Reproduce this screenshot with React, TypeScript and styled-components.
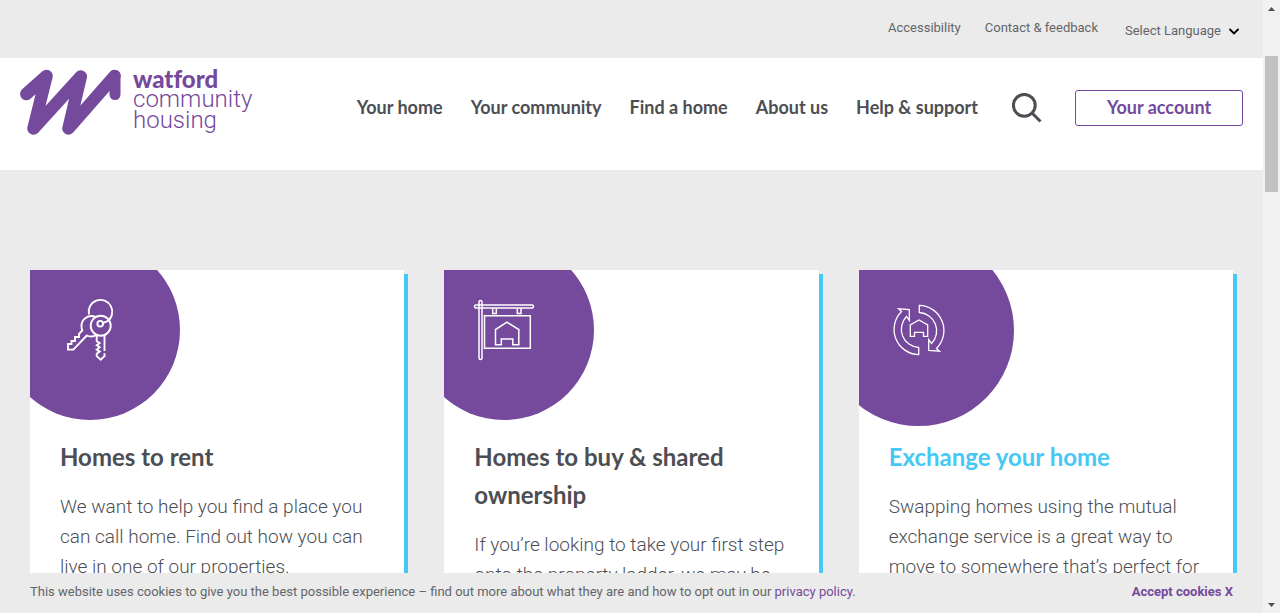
import React from 'react';
import styled, { createGlobalStyle, ThemeProvider } from 'styled-components';

const theme = {
  purple: '#75499c',
  blue: '#45c8f5',
  ink: '#4d4e53',
  softInk: '#646569',
  grey: '#ebebeb',
  heading: 'Lato, "Open Sans", sans-serif',
  body: 'Roboto, "Open Sans", sans-serif',
};

const GlobalStyle = createGlobalStyle`
  *, *::before, *::after { box-sizing: border-box; }
  body {
    margin: 0;
    background: ${theme.grey};
    color: ${theme.ink};
    font-family: ${theme.body};
  }
  h2, p, ul { margin: 0; padding: 0; }
  ul { list-style: none; }
  a { color: inherit; text-decoration: none; }
`;

const Shell = styled.div`
  display: grid;
  grid-template-columns: minmax(0, 1fr) 17px;
  height: 100vh;
  overflow: hidden;
`;

const Page = styled.div`
  display: flex;
  flex-direction: column;
  min-height: 0;
`;

const TopBar = styled.div`
  display: flex;
  flex: none;
  justify-content: flex-end;
  align-items: flex-start;
  gap: 24px;
  min-height: 58px;
  padding: 18px 23px 0 20px;
  color: ${p => p.theme.softInk};
  font-size: 13px;
  line-height: 20px;
`;

const Language = styled.div`
  display: grid;
  grid-template-columns: 103px 12px;
  align-items: center;
  margin: 3px 0 0 3px;
`;

const LanguageSelect = styled.select`
  grid-area: 1 / 1 / 2 / 3;
  width: 100%;
  padding: 0;
  border: 0;
  background: none;
  appearance: none;
  color: inherit;
  font: inherit;
`;

const Chevron = styled.svg`
  grid-area: 1 / 2;
  width: 12px;
  height: 12px;
  pointer-events: none;
`;

const Header = styled.header`
  display: flex;
  flex: none;
  justify-content: space-between;
  align-items: flex-start;
  padding: 11px 20px 23px;
  background: #fff;
`;

const Logo = styled.a`
  display: flex;
  gap: 12px;
  color: ${p => p.theme.purple};
`;

const LogoMark = styled.svg`
  width: 101px;
  height: 66px;
`;

const LogoWords = styled.span`
  display: flex;
  flex-direction: column;
  font-family: ${p => p.theme.body};
  font-size: 24px;
  font-weight: 300;
  font-variant-ligatures: none;
  line-height: 21px;

  strong {
    font-family: ${p => p.theme.heading};
    font-weight: 900;
    line-height: 20px;
  }
`;

const Nav = styled.nav`
  display: flex;
  align-items: center;
  min-height: 78px;
`;

const NavList = styled.ul`
  display: flex;
  gap: 28px;
  padding-bottom: 2px;
  font-family: ${p => p.theme.heading};
  font-size: 18px;
  font-weight: 700;
  line-height: 24px;
`;

const SearchButton = styled.button`
  display: flex;
  margin: 0 33px 0 34px;
  padding: 0;
  border: 0;
  background: none;
  color: inherit;

  svg { width: 30px; height: 30px; }
`;

const AccountButton = styled.button`
  width: 168px;
  height: 36px;
  padding: 0 0 2px;
  border: 1px solid ${p => p.theme.purple};
  border-radius: 3px;
  background: #fff;
  color: ${p => p.theme.purple};
  font: 700 18px/24px ${p => p.theme.heading};
`;

const Main = styled.main`
  flex: 1;
  min-height: 0;
  overflow: hidden;
  padding: 100px 30px 0;
`;

const Cards = styled.div`
  display: grid;
  grid-template-columns: repeat(3, minmax(0, 1fr));
  gap: 40px;
`;

const Card = styled.article`
  overflow: hidden;
  min-height: 420px;
  background: #fff;
  box-shadow: 4px 4px 0 ${p => p.theme.blue};
`;

const IconHolder = styled.div`
  display: flex;
  justify-content: center;
  align-items: center;
  width: 120px;
  height: 120px;
`;

const Disc = styled.div<{ $size: number }>`
  display: flex;
  flex: none;
  justify-content: center;
  align-items: center;
  width: ${p => p.$size}px;
  height: ${p => p.$size}px;
  border-radius: 50%;
  background: ${p => p.theme.purple};

  svg { width: 60px; height: 60px; overflow: visible; }
`;

const CardBody = styled.div`
  padding: 48px 30px 30px;
`;

const CardTitle = styled.h2<{ $active?: boolean }>`
  margin-bottom: 16px;
  color: ${p => (p.$active ? p.theme.blue : p.theme.ink)};
  font: 700 24px/38px ${p => p.theme.heading};
`;

const CardText = styled.p`
  font-size: 19px;
  font-weight: 300;
  line-height: 30px;
`;

const CookieBar = styled.footer`
  display: flex;
  flex: none;
  justify-content: space-between;
  align-items: center;
  min-height: 40px;
  padding: 0 30px 2px;
  background: ${p => p.theme.grey};
  color: ${p => p.theme.softInk};
  font-size: 13px;
  line-height: 20px;

  a { color: ${p => p.theme.purple}; }
`;

const AcceptButton = styled.button`
  padding: 0;
  border: 0;
  background: none;
  color: ${p => p.theme.purple};
  font: 700 13px/20px ${p => p.theme.body};
`;

const ScrollTrack = styled.div`
  display: flex;
  flex-direction: column;
  align-items: center;
  justify-content: space-between;
  padding: 7px 2px 6px;
  background: #f1f1f1;
`;

const ScrollThumb = styled.div`
  width: 13px;
  height: 136px;
  margin: 45px 0 auto;
  background: #c1c1c1;
`;

const Arrow = styled.svg`
  width: 7px;
  height: 4px;
  fill: #505050;
`;

const KeysIcon = () => (
  <svg viewBox="0 0 60 60" fill="none" stroke="#fff" strokeWidth="1.9" aria-hidden="true">
    <path d="M29 14.5A11.8 11.8 0 1 1 47 21.5L42.5 23.2" />
    <circle cx="40.7" cy="25.7" r="10" />
    <circle cx="40.2" cy="23.7" r="2.8" />
    <path d="M36.7 35v6.2l3 1.8-3 2.3 3 2-3 2.3 3 2-3 2.2v2.4l4 3.6 3.8-3.8v-2.8M44.5 51V35" />
    <path d="M35.5 16.8C28 14 21 19.5 21.5 26.5c0 1.5.3 2.8.8 4L19 34v3h-4v4h-3.5v3H8v5.6h5.3L26.8 35.5c3 1.3 6.5 1.3 9.7-.5" />
  </svg>
);

const SignIcon = () => (
  <svg viewBox="0 0 60 60" fill="none" stroke="#fff" strokeWidth="1.5" aria-hidden="true">
    <path d="M8 8v50a1.5 1.5 0 0 1-3 0V8H2a1.5 1.5 0 0 1 0-3h3V2a1.5 1.5 0 0 1 3 0v3h50a1.5 1.5 0 0 1 0 3zM5 8V5h3v3z" />
    <path d="M18.7 8v5.5h3.6V8M43.3 8v5.5H47V8" />
    <path d="M10.5 15.8h45.8v32.5H10.5z" />
    <path d="M21.5 44.7V29.5L33 22.2l11.8 7.3v15.2h-6V39H27.3v5.7z" />
  </svg>
);

const SWAP_ARROW =
  'M.3-24.7A25.3 25.3 0 0 1 17.5 18.5L20.5 21.2 9.7 20.5V9.5L12.5 13.5A18.3 18.3 0 0 0 .3-17.5z';

const ExchangeIcon = () => (
  <svg viewBox="-30 -30 60 60" fill="none" stroke="#fff" strokeWidth="1.3" aria-hidden="true">
    <path d={SWAP_ARROW} />
    <path d={SWAP_ARROW} transform="rotate(180)" />
    <path d="M-8.7 6.3V-5L0-10 8.7-5V6.3H4.5v-4h-9v4z" />
  </svg>
);

const CARDS = [
  {
    title: 'Homes to rent',
    text: 'We want to help you find a place you can call home. Find out how you can live in one of our properties.',
    Icon: KeysIcon,
  },
  {
    title: 'Homes to buy & shared ownership',
    text: 'If you’re looking to take your first step onto the property ladder, we may be able to help.',
    Icon: SignIcon,
  },
  {
    title: 'Exchange your home',
    text: 'Swapping homes using the mutual exchange service is a great way to move to somewhere that’s perfect for you.',
    Icon: ExchangeIcon,
    active: true,
  },
];

const NAV_ITEMS = ['Your home', 'Your community', 'Find a home', 'About us', 'Help & support'];

export default function App() {
  return (
    <ThemeProvider theme={theme}>
      <GlobalStyle />
      <Shell>
        <Page>
          <TopBar>
            <a href="#accessibility">Accessibility</a>
            <a href="#contact">Contact &amp; feedback</a>
            <Language>
              <LanguageSelect aria-label="Select Language">
                <option>Select Language</option>
              </LanguageSelect>
              <Chevron viewBox="0 0 12 12" fill="none" stroke="#000" strokeWidth="1.8" aria-hidden="true">
                <path d="M1.5 4 6 8.5 10.5 4" />
              </Chevron>
            </Language>
          </TopBar>

          <Header>
            <Logo href="#home">
              <LogoMark
                viewBox="20 69 101 66"
                fill="none"
                stroke="currentColor"
                strokeWidth="12.5"
                strokeLinecap="round"
                strokeLinejoin="round"
                aria-hidden="true"
              >
                <path d="M26.3 94 46.5 76 33.5 128.5 80.8 76.5 68.5 128.5 114.5 76" />
                <path strokeWidth="11" d="M115 75.5V94.5" />
              </LogoMark>
              <LogoWords>
                <strong>watford</strong>
                <span>community</span>
                <span>housing</span>
              </LogoWords>
            </Logo>
            <Nav>
              <NavList>
                {NAV_ITEMS.map(item => (
                  <li key={item}>
                    <a href="#menu">{item}</a>
                  </li>
                ))}
              </NavList>
              <SearchButton aria-label="Search">
                <svg viewBox="0 0 30 30" fill="none" stroke="currentColor" strokeWidth="3">
                  <circle cx="12.3" cy="12.3" r="10.9" />
                  <path d="m20 20 8.5 8.5" />
                </svg>
              </SearchButton>
              <AccountButton>Your account</AccountButton>
            </Nav>
          </Header>

          <Main>
            <Cards>
              {CARDS.map(({ title, text, Icon, active }) => (
                <Card key={title}>
                  <IconHolder>
                    <Disc $size={active ? 191 : 180}>
                      <Icon />
                    </Disc>
                  </IconHolder>
                  <CardBody>
                    <CardTitle $active={active}>{title}</CardTitle>
                    <CardText>{text}</CardText>
                  </CardBody>
                </Card>
              ))}
            </Cards>
          </Main>

          <CookieBar>
            <p>
              This website uses cookies to give you the best possible experience – find out more about what they are and
              how to opt out in our <a href="#privacy">privacy policy</a>.
            </p>
            <AcceptButton>Accept cookies X</AcceptButton>
          </CookieBar>
        </Page>

        <ScrollTrack aria-hidden="true">
          <Arrow viewBox="0 0 7 4">
            <path d="M0 4 3.5 0 7 4z" />
          </Arrow>
          <ScrollThumb />
          <Arrow viewBox="0 0 7 4">
            <path d="M0 0h7L3.5 4z" />
          </Arrow>
        </ScrollTrack>
      </Shell>
    </ThemeProvider>
  );
}
